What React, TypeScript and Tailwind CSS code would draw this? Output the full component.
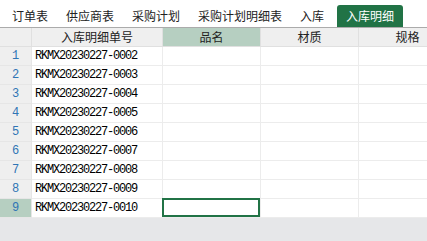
const tabs = ["订单表", "供应商表", "采购计划", "采购计划明细表", "入库", "入库明细"];
const active = 5;
const rows = [
	"RKMX20230227-0002",
	"RKMX20230227-0003",
	"RKMX20230227-0004",
	"RKMX20230227-0005",
	"RKMX20230227-0006",
	"RKMX20230227-0007",
	"RKMX20230227-0008",
	"RKMX20230227-0009",
	"RKMX20230227-0010",
];

const cjk = { fontFamily: '"Noto Sans CJK SC", "Noto Sans", sans-serif' };
const mono = { fontFamily: '"Liberation Mono", "DejaVu Sans Mono", monospace' };

export default function App() {
	return (
		<div className="w-[427px] h-[241px] overflow-hidden bg-[#e6e7e9] text-[12px] text-[#222]" style={cjk}>
			{/* sheet tabs */}
			<div className="h-[28px] bg-white border-b border-[#ababab] flex items-end pl-[3px]">
				{tabs.map((t, i) =>
					i === active ? (
						<div key={t} className="h-[22px] ml-[4px] px-[9px] bg-[#217346] text-white rounded-t-[3px] flex items-center leading-none">
							{t}
						</div>
					) : (
						<div key={t} className="h-[22px] px-[9px] flex items-center leading-none">
							{t}
						</div>
					)
				)}
			</div>

			{/* header */}
			<div className="flex h-[19px] bg-white">
				<div className="w-[32px] shrink-0 bg-[#efefef] border-r border-b border-[#e0e0e0]" />
				<div className="w-[131px] shrink-0 bg-[#efefef] border-r border-b border-[#e0e0e0] flex items-center justify-center leading-none">
					入库明细单号
				</div>
				<div className="w-[98px] shrink-0 bg-[#b6cfc1] border-r border-b border-[#e0e0e0] flex items-center justify-center leading-none">
					品名
				</div>
				<div className="w-[98px] shrink-0 bg-[#efefef] border-r border-b border-[#e0e0e0] flex items-center justify-center leading-none">
					材质
				</div>
				<div className="w-[98px] shrink-0 bg-[#efefef] border-r border-b border-[#e0e0e0] flex items-center justify-center leading-none">
					规格
				</div>
			</div>

			{/* rows */}
			{rows.map((code, i) => {
				const last = i === rows.length - 1;
				return (
					<div key={code} className="flex h-[19px] bg-white">
						<div
							className={
								"w-[32px] shrink-0 border-r border-b border-[#e6e6e6] flex items-center justify-center text-[#2f75b5] text-[12px] leading-none " +
								(last ? "bg-[#b6cfc1]" : "bg-[#efefef]")
							}
							style={mono}
						>
							{i + 1}
						</div>
						<div
							className="w-[131px] shrink-0 border-r border-b border-[#ececec] flex items-center pl-[3px] text-[12px] tracking-[-1.2px] text-black leading-none"
							style={mono}
						>
							{code}
						</div>
						<div className="w-[98px] shrink-0 border-r border-b border-[#ececec] relative">
							{last && <div className="absolute -left-px -top-px w-[98px] h-[19px] border-2 border-[#217346]" />}
						</div>
						<div className="w-[98px] shrink-0 border-r border-b border-[#ececec]" />
						<div className="w-[98px] shrink-0 border-r border-b border-[#ececec]" />
					</div>
				);
			})}
		</div>
	);
}
